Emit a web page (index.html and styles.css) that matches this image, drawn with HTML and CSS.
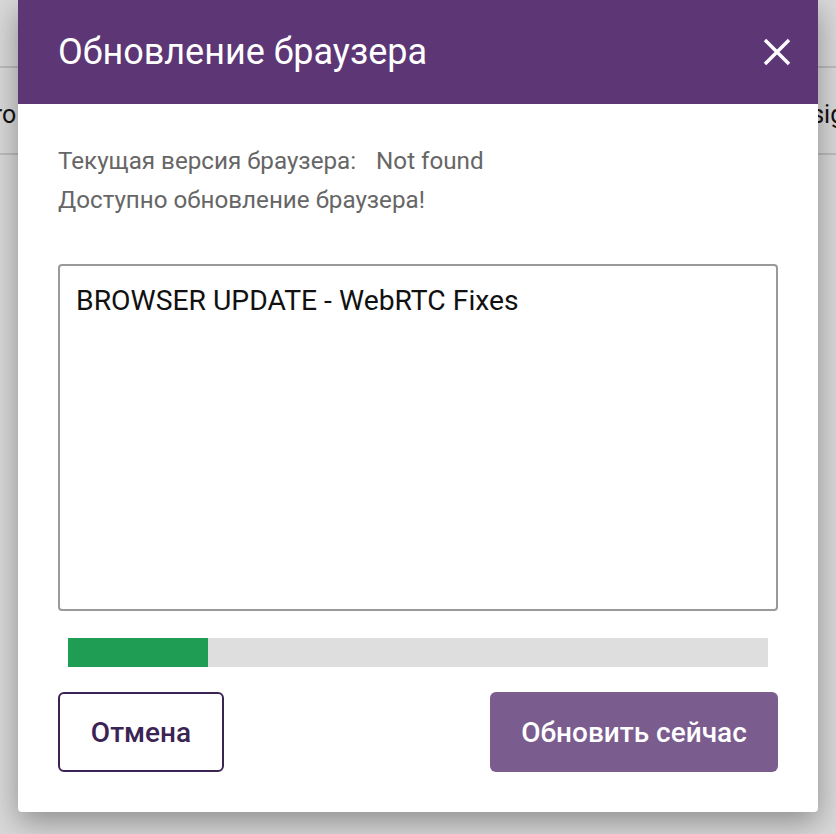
FILE: index.html
```html
<!doctype html>
<html lang="ru">
<head>
  <meta charset="UTF-8">
  <meta name="viewport" content="width=device-width, initial-scale=1.0">
  <title>Обновление браузера</title>
  <link rel="stylesheet" href="styles.css">
</head>
<body>
<div class="page">
  <div class="page-top"></div>
  <div class="page-row">
    <span class="row-left">Pro</span>
    <span class="row-right">Design</span>
  </div>
</div>
<div class="overlay">
  <div class="dialog">
    <header class="dialog-head">
      <h1>Обновление браузера</h1>
      <button class="close" type="button" aria-label="Закрыть">
        <svg width="30" height="30" viewBox="0 0 30 30">
          <path d="M3 3 L27 27 M27 3 L3 27" stroke="#fff" stroke-width="3.4" fill="none"/>
        </svg>
      </button>
    </header>
    <div class="dialog-body">
      <p class="info"><span class="label">Текущая версия браузера:</span><span class="value">Not found</span></p>
      <p class="info">Доступно обновление браузера!</p>
      <div class="notes">BROWSER UPDATE - WebRTC Fixes</div>
      <div class="progress"><div class="progress-fill" style="width: 20%"></div></div>
      <div class="actions">
        <button class="btn btn-cancel" type="button">Отмена</button>
        <button class="btn btn-update" type="button">Обновить сейчас</button>
      </div>
    </div>
  </div>
</div>
</body>
</html>
```
FILE: styles.css
```css
html, body { margin: 0; padding: 0; }
* { box-sizing: border-box; font-family: Roboto, "Noto Sans", sans-serif; }
body { background: #c9c9c9; width: 836px; height: 834px; overflow: hidden; position: relative; }

.page { background: #d9d9d9; height: 834px; }
.page-top { height: 68px; border-bottom: 2px solid #bdbdbd; }
.page-row { height: 87px; padding-top: 8px; border-bottom: 2px solid #bdbdbd; display: flex; justify-content: space-between; align-items: center; font-size: 25px; color: #111; overflow: hidden; }
.row-left { margin-left: -22px; }
.row-right { margin-right: -22px; }

.overlay { position: absolute; inset: 0; }
.dialog { position: absolute; left: 18px; top: 0; width: 800px; height: 812px; background: #fff; border-radius: 0 0 4px 4px; box-shadow: 0 10px 30px rgba(0,0,0,.35); display: flex; flex-direction: column; }

.dialog-head { height: 104px; background: #5d3775; display: flex; align-items: center; justify-content: space-between; padding: 0 26px 0 40px; }
.dialog-head h1 { margin: 0; color: #fff; font-size: 36px; font-weight: 400; }
.close { background: none; border: 0; padding: 0; width: 30px; height: 30px; cursor: pointer; }

.dialog-body { padding: 37px 40px 0 40px; display: flex; flex-direction: column; }
.info { margin: 0; font-size: 24.2px; color: #666; line-height: 40px; }
.info + .info { margin-top: -1px; }
.label { margin-right: 20px; }

.notes { margin-top: 44px; height: 347px; border: 2px solid #9a9a9a; border-radius: 4px; padding: 18px 16px; font-size: 28.3px; color: #111; }

.progress { margin: 27px 10px 0; height: 29px; background: #dedede; }
.progress-fill { height: 100%; background: #1f9d55; }

.actions { margin-top: 25px; display: flex; justify-content: space-between; }
.btn { height: 80px; border-radius: 6px; font-size: 28px; font-weight: 500; cursor: pointer; }
.btn-cancel { width: 166px; background: #fff; border: 2px solid #3b2354; color: #3b2354; }
.btn-update { width: 288px; background: #7b5c8e; border: 0; color: #fff; }
```
